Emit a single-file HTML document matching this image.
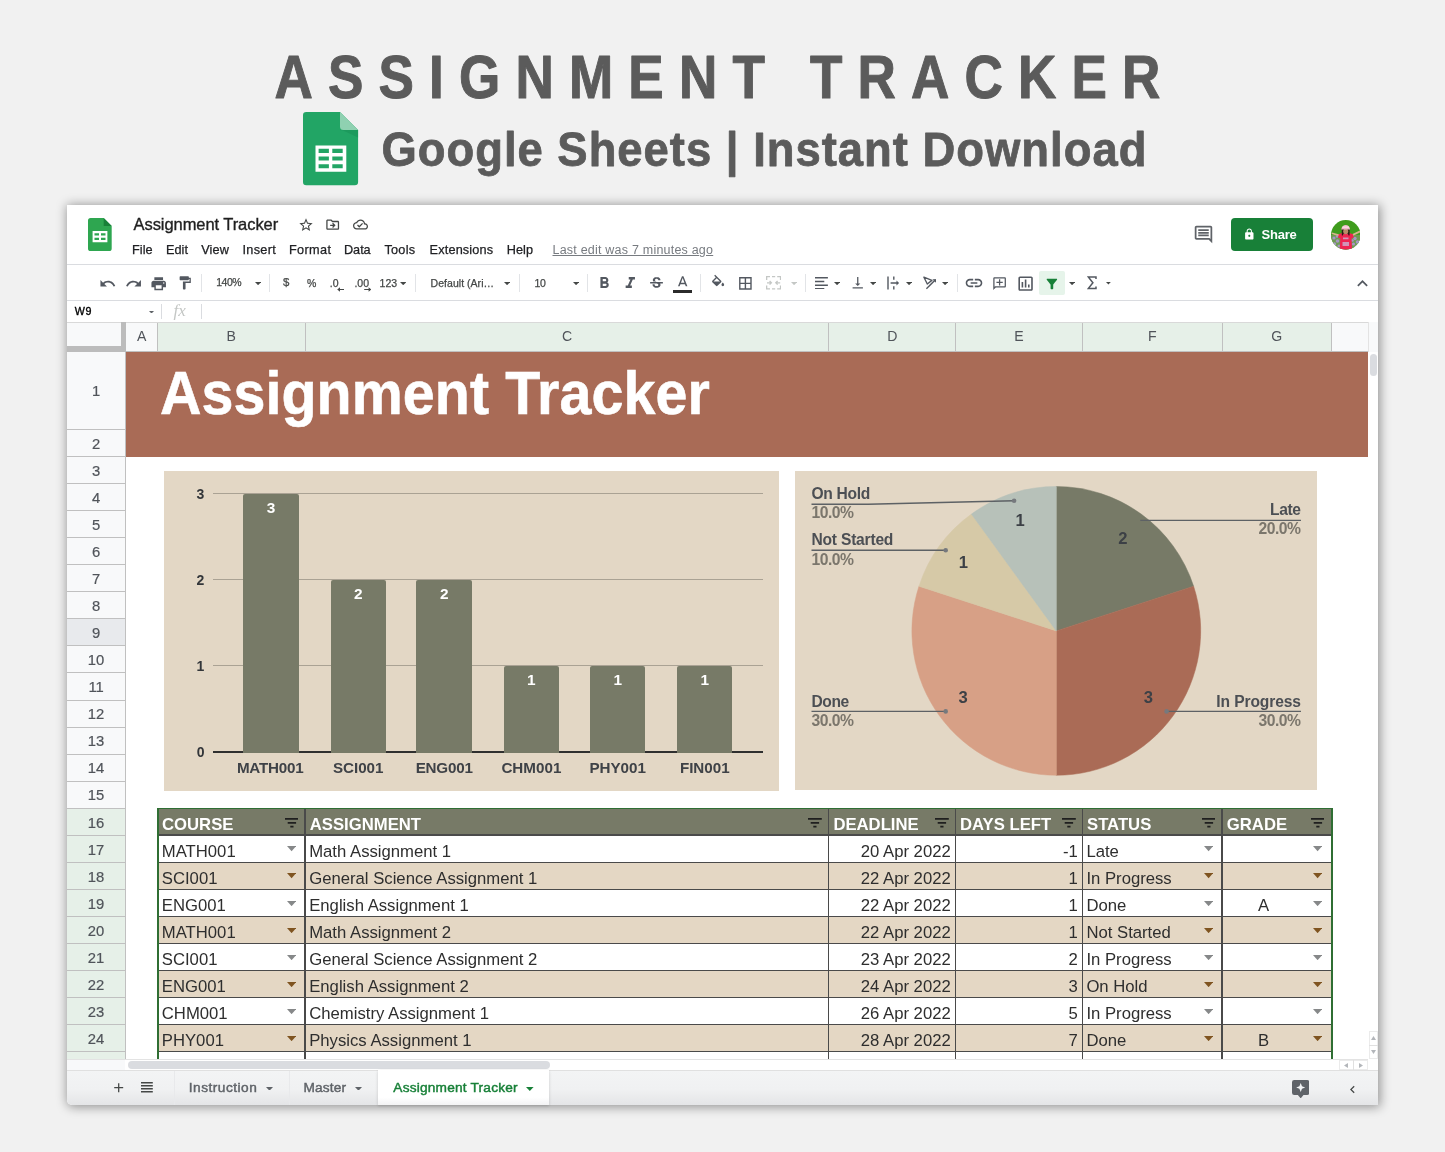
<!DOCTYPE html>
<html><head><meta charset="utf-8"><title>Assignment Tracker</title>
<style>
html,body{margin:0;padding:0}
body{width:1445px;height:1152px;background:#f1f1f1;position:relative;overflow:hidden;font-family:"Liberation Sans",sans-serif}
.t{position:absolute;line-height:1;white-space:nowrap}
.r{position:absolute;display:block}
#win{position:absolute;left:67px;top:205px;width:1311.4px;height:899.7px;background:#fff;border-radius:0 0 0 5px;box-shadow:1px 1px 11px 1px rgba(0,0,0,.4)}
</style></head><body><div id="all" style="position:absolute;left:0;top:0;width:1445px;height:1152px;will-change:transform">

<svg class="r" style="left:253.60px;top:36.90px" width="927.0" height="85.4"><text transform="scale(0.87,1)" x="23.56" y="61.00" font-family="Liberation Sans, sans-serif" font-weight="700" font-size="61.0" letter-spacing="17.444" fill="#5b5b5b" stroke="#5b5b5b" stroke-width="1.0" stroke-linejoin="round">ASSIGNMENT TRACKER</text></svg>
<svg class="r" style="left:361.20px;top:117.70px" width="806.0" height="66.9"><text transform="scale(0.95,1)" x="21.47" y="47.80" font-family="Liberation Sans, sans-serif" font-weight="700" font-size="47.8" letter-spacing="1.050" fill="#5b5b5b" stroke="#5b5b5b" stroke-width="0.8" stroke-linejoin="round">Google Sheets | Instant Download</text></svg>
<svg class="r" style="left:302.1px;top:110.6px" width="57.1" height="75.3" viewBox="-1 -1 57.1 75.3">
<path d="M3.300 0H37L55.100 18.100V70a3.300 3.300 0 0 1-3.300 3.300H3.300a3.300 3.300 0 0 1-3.300-3.300V3.300a3.300 3.300 0 0 1 3.300-3.300z" fill="#22a565"/>
<path d="M37 18.100H55.100V25.500L40 18.600z" fill="#178a52" opacity=".4"/>
<path d="M37 0L55.100 18.100H40.500a3.500 3.500 0 0 1-3.500-3.500z" fill="#8fd1b1"/>
<path d="M12.500 33.400h30.800v26.400H12.500zM15.600 36.800v4.300h10.300v-4.300zM29.300 36.800v4.300h10.400v-4.300zM15.600 44.600v3.900h10.300v-3.900zM29.300 44.600v3.900h10.400v-3.900zM15.600 52.300v3.900h10.300v-3.900zM29.300 52.300v3.900h10.400v-3.900z" fill="#fff" fill-rule="evenodd"/>
</svg>
<div id="win"></div>
<svg class="r" style="left:88.3px;top:218px" width="23.7" height="33" viewBox="0 0 23.7 33">
<path d="M2.6 0H15.700L23.700 8V30.400a2.600 2.600 0 0 1-2.600 2.600H2.600A2.600 2.600 0 0 1 0 30.400V2.600A2.600 2.600 0 0 1 2.600 0z" fill="#2ea650"/>
<path d="M15.700 0L23.700 8H15.700z" fill="#188038"/>
<path d="M4.600 13.100h14.800v11.100H4.600zM6.500 15.300v2.300h4.500v-2.300zM13 15.300v2.300h4.500v-2.300zM6.500 19.700v2.300h4.500v-2.300zM13 19.700v2.300h4.500v-2.300z" fill="#fff" fill-rule="evenodd"/>
</svg>
<span class="t" style="left:133.50px;top:216.03px;font-size:16.5px;color:#1f1f1f;letter-spacing:-0.065px;-webkit-text-stroke:.35px currentColor;">Assignment Tracker</span>
<svg class="r" style="left:297.50px;top:216.70px;" width="16" height="16" viewBox="0 0 24 24" fill="#444746"><path d="M22 9.240l-7.190-.62L12 2 9.190 8.630 2 9.240l5.460 4.730L5.820 21 12 17.270 18.180 21l-1.630-7.030L22 9.240zM12 15.400l-3.760 2.270 1-4.280-3.320-2.880 4.380-.38L12 6.100l1.710 4.040 4.380.38-3.320 2.880 1 4.280L12 15.400z"/></svg>
<svg class="r" style="left:324.60px;top:216.70px;" width="15.4" height="15.4" viewBox="0 0 24 24" fill="#444746"><path d="M20 6h-8l-2-2H4c-1.100 0-2 .9-2 2v12c0 1.100.9 2 2 2h16c1.100 0 2-.9 2-2V8c0-1.100-.9-2-2-2zm0 12H4V6h5.170l2 2H20v10zm-7.500-1l4-4-4-4-1.410 1.410L12.670 12H8v2h4.670l-1.580 1.590z"/></svg>
<svg class="r" style="left:352.70px;top:217.30px;" width="15" height="15" viewBox="0 0 24 24" fill="#444746"><path d="M19.350 10.040C18.670 6.590 15.640 4 12 4 9.110 4 6.600 5.640 5.350 8.040 2.340 8.360 0 10.910 0 14c0 3.310 2.690 6 6 6h13c2.760 0 5-2.240 5-5 0-2.640-2.050-4.780-4.650-4.960zM19 18H6c-2.210 0-4-1.790-4-4s1.790-4 4-4h.71C7.370 7.690 9.480 6 12 6c3.040 0 5.500 2.460 5.500 5.500v.5H19c1.660 0 3 1.340 3 3s-1.340 3-3 3zm-9-3.820l-2.090-2.090L6.500 13.500 10 17l6.010-6.010-1.410-1.410z"/></svg>
<span class="t" style="left:132.00px;top:243.95px;font-size:12.7px;color:#202124;letter-spacing:0.079px;-webkit-text-stroke:.25px currentColor;">File</span>
<span class="t" style="left:165.90px;top:243.95px;font-size:12.7px;color:#202124;letter-spacing:0.072px;-webkit-text-stroke:.25px currentColor;">Edit</span>
<span class="t" style="left:201.20px;top:243.95px;font-size:12.7px;color:#202124;letter-spacing:0.158px;-webkit-text-stroke:.25px currentColor;">View</span>
<span class="t" style="left:242.40px;top:243.95px;font-size:12.7px;color:#202124;letter-spacing:0.347px;-webkit-text-stroke:.25px currentColor;">Insert</span>
<span class="t" style="left:289.00px;top:243.95px;font-size:12.7px;color:#202124;letter-spacing:0.356px;-webkit-text-stroke:.25px currentColor;">Format</span>
<span class="t" style="left:344.00px;top:243.95px;font-size:12.7px;color:#202124;letter-spacing:-0.042px;-webkit-text-stroke:.25px currentColor;">Data</span>
<span class="t" style="left:384.40px;top:243.95px;font-size:12.7px;color:#202124;letter-spacing:0.286px;-webkit-text-stroke:.25px currentColor;">Tools</span>
<span class="t" style="left:429.60px;top:243.95px;font-size:12.7px;color:#202124;letter-spacing:0.164px;-webkit-text-stroke:.25px currentColor;">Extensions</span>
<span class="t" style="left:506.70px;top:243.95px;font-size:12.7px;color:#202124;letter-spacing:0.060px;-webkit-text-stroke:.25px currentColor;">Help</span>
<span class="t" style="left:552.50px;top:244.12px;font-size:12.5px;color:#777b80;letter-spacing:0.213px;text-decoration:underline;text-underline-offset:.6px;text-decoration-thickness:1px;">Last edit was 7 minutes ago</span>
<svg class="r" style="left:1193.30px;top:223.50px;" width="21" height="21" viewBox="0 0 24 24" fill="#5f6368"><path d="M21.990 4c0-1.100-.89-2-1.990-2H4c-1.100 0-2 .9-2 2v12c0 1.100.9 2 2 2h14l4 4-.010-18zM20 4v13.170L18.830 16H4V4h16zM6 12h12v2H6zm0-3h12v2H6zm0-3h12v2H6z"/></svg>
<div class="r" style="left:1231.40px;top:218.00px;width:81.40px;height:33.20px;background:#188038;border-radius:4px;"></div>
<svg class="r" style="left:1243.20px;top:227.90px;" width="12.6" height="12.6" viewBox="0 0 24 24" fill="#fff"><path d="M18 8h-1V6c0-2.760-2.240-5-5-5S7 3.240 7 6v2H6c-1.100 0-2 .9-2 2v10c0 1.100.9 2 2 2h12c1.100 0 2-.9 2-2V10c0-1.100-.9-2-2-2zm-6 9c-1.100 0-2-.9-2-2s.9-2 2-2 2 .9 2 2-.9 2-2 2zm3.100-9H8.900V6c0-1.710 1.390-3.100 3.100-3.100 1.710 0 3.100 1.390 3.100 3.100v2z"/></svg>
<span class="t" style="left:1261.60px;top:227.80px;font-size:13px;color:#fff;font-weight:700;letter-spacing:-0.233px;">Share</span>
<svg class="r" style="left:1330.900px;top:219.800px" width="29.600" height="29.800" viewBox="0 0 29.6 29.8">
<defs><clipPath id="avc"><circle cx="14.800" cy="14.900" r="14.800"/></clipPath></defs>
<g clip-path="url(#avc)">
<rect width="29.600" height="29.800" fill="#3f9c1d"/>
<rect y="15" width="29.600" height="15" fill="#6f9a52"/>
<g fill="#a596c4"><circle cx="3" cy="18" r="1.600"/><circle cx="6.500" cy="21" r="1.800"/><circle cx="3.500" cy="24" r="1.700"/><circle cx="8" cy="26" r="1.600"/><circle cx="24" cy="18.500" r="1.700"/><circle cx="26.500" cy="22" r="1.800"/><circle cx="22.500" cy="24" r="1.600"/><circle cx="25" cy="27" r="1.600"/><circle cx="6" cy="16.500" r="1.200"/><circle cx="21.500" cy="20.500" r="1.300"/></g>
<path d="M1 12.500L8.500 14.500 8 16.300 .6 14z" fill="#d8b48e"/>
<path d="M28.800 10.500L21 14.300 21.700 16 29.300 12.300z" fill="#d8b48e"/>
<path d="M7.800 14.200L11 13h7.500l3.400 1.200.8 3.300-2.200.9.600 11.400H8.700l.6-11.400-2.300-.9z" fill="#ee2450"/>
<path d="M12 17.500h5.500v1.800H12zM11.500 22h6.500v4h-6.500z" fill="#c8b8d8" opacity=".75"/>
<path d="M10.800 8.500h7.800v6.800c-.9.700-1.500-.6-1.500-1.600h-4.800c0 1-.6 2.300-1.500 1.600z" fill="#2a1c16"/>
<ellipse cx="14.700" cy="11.300" rx="2.500" ry="2.900" fill="#b98a68"/>
<path d="M10.300 9.600c0-6.300 8.800-6.300 8.800 0z" fill="#f0b8c8"/>
<path d="M11.300 6.500h6.800v1.200h-6.800z" fill="#fff" opacity=".6"/>
</g></svg>
<div class="r" style="left:67.00px;top:264.00px;width:1311.40px;height:1.00px;background:#dadce0;"></div>
<div class="r" style="left:67.00px;top:300.00px;width:1311.40px;height:1.00px;background:#dadce0;"></div>
<svg class="r" style="left:98.60px;top:274.50px;" width="17.4" height="17.4" viewBox="0 0 24 24" fill="#535860"><path d="M12.5 8c-2.65 0-5.05.99-6.9 2.6L2 7v9h9l-3.62-3.62c1.39-1.16 3.16-1.88 5.12-1.88 3.54 0 6.55 2.31 7.6 5.5l2.37-.78C21.08 11.03 17.15 8 12.5 8z"/></svg>
<svg class="r" style="left:124.70px;top:274.50px;" width="17.4" height="17.4" viewBox="0 0 24 24" fill="#535860"><path d="M18.4 10.6C16.55 8.99 14.15 8 11.5 8c-4.65 0-8.58 3.03-9.96 7.22L3.9 16c1.05-3.19 4.05-5.5 7.6-5.5 1.95 0 3.73.72 5.12 1.88L13 16h9V7l-3.6 3.6z"/></svg>
<svg class="r" style="left:150.30px;top:274.50px;" width="17.4" height="17.4" viewBox="0 0 24 24" fill="#535860"><path d="M19 8H5c-1.66 0-3 1.34-3 3v6h4v4h12v-4h4v-6c0-1.66-1.34-3-3-3zm-3 11H8v-5h8v5zm3-7c-.55 0-1-.45-1-1s.45-1 1-1 1 .45 1 1-.45 1-1 1zm-1-9H6v4h12V3z"/></svg>
<svg class="r" style="left:177.00px;top:275.30px;" width="15.8" height="15.8" viewBox="0 0 24 24" fill="#535860"><path d="M18 4V3c0-.55-.45-1-1-1H5c-.55 0-1 .45-1 1v4c0 .55.45 1 1 1h12c.55 0 1-.45 1-1V6h1v4H9v11c0 .55.45 1 1 1h2c.55 0 1-.45 1-1v-9h8V4h-3z"/></svg>
<div class="r" style="left:201.20px;top:273.50px;width:1.00px;height:18.50px;background:#e2e4e7;"></div>
<span class="t" style="left:216.30px;top:277.41px;font-size:10.5px;color:#444746;letter-spacing:-0.518px;-webkit-text-stroke:.25px currentColor;">140%</span>
<svg class="r" style="left:254.70px;top:281.60px" width="6.2" height="3.2" viewBox="0 0 10 5" preserveAspectRatio="none" fill="#444746"><path d="M0 0h10L5 5z"/></svg>
<div class="r" style="left:268.80px;top:273.50px;width:1.00px;height:18.50px;background:#e2e4e7;"></div>
<span class="t" style="left:283.00px;top:276.95px;font-size:11.4px;color:#444746;-webkit-text-stroke:.25px currentColor;">$</span>
<span class="t" style="left:307.00px;top:277.81px;font-size:10.5px;color:#444746;-webkit-text-stroke:.25px currentColor;">%</span>
<span class="t" style="left:329.80px;top:277.81px;font-size:10.5px;color:#444746;-webkit-text-stroke:.25px currentColor;">.0</span>
<span class="t" style="left:354.40px;top:277.81px;font-size:10.5px;color:#444746;-webkit-text-stroke:.25px currentColor;">.00</span>
<svg class="r" style="left:336.600px;top:287.200px" width="7.600" height="5" viewBox="0 0 7.6 5" fill="#444746"><path d="M7.400 1.900H3V.3L.2 2.500 3 4.700V3.100h4.400z"/></svg>
<svg class="r" style="left:363.800px;top:287.200px" width="7.600" height="5" viewBox="0 0 7.6 5" fill="#444746"><path d="M.2 1.900H4.600V.3L7.400 2.500 4.600 4.700V3.100H.2z"/></svg>
<span class="t" style="left:379.60px;top:277.81px;font-size:10.5px;color:#444746;letter-spacing:-0.009px;-webkit-text-stroke:.25px currentColor;">123</span>
<svg class="r" style="left:399.50px;top:282.00px" width="6.4" height="3.2" viewBox="0 0 10 5" preserveAspectRatio="none" fill="#444746"><path d="M0 0h10L5 5z"/></svg>
<div class="r" style="left:414.70px;top:273.50px;width:1.00px;height:18.50px;background:#e2e4e7;"></div>
<span class="t" style="left:430.60px;top:277.81px;font-size:10.5px;color:#444746;letter-spacing:0.032px;-webkit-text-stroke:.25px currentColor;">Default (Ari&hellip;</span>
<svg class="r" style="left:504.30px;top:281.80px" width="6.2" height="3.2" viewBox="0 0 10 5" preserveAspectRatio="none" fill="#444746"><path d="M0 0h10L5 5z"/></svg>
<div class="r" style="left:519.10px;top:273.50px;width:1.00px;height:18.50px;background:#e2e4e7;"></div>
<span class="t" style="left:534.50px;top:277.51px;font-size:10.5px;color:#444746;letter-spacing:-0.279px;-webkit-text-stroke:.25px currentColor;">10</span>
<svg class="r" style="left:573.00px;top:281.80px" width="6.2" height="3.2" viewBox="0 0 10 5" preserveAspectRatio="none" fill="#444746"><path d="M0 0h10L5 5z"/></svg>
<div class="r" style="left:587.20px;top:273.50px;width:1.00px;height:18.50px;background:#e2e4e7;"></div>
<svg class="r" style="left:595.10px;top:274.10px;" width="18.6" height="18.6" viewBox="0 0 24 24" fill="#535860"><path d="M15.6 10.79c.97-.67 1.65-1.77 1.65-2.79 0-2.26-1.75-4-4-4H7v14h7.04c2.09 0 3.71-1.7 3.71-3.79 0-1.52-.86-2.82-2.15-3.42zM10 6.5h3c.83 0 1.5.67 1.5 1.5s-.67 1.5-1.5 1.5h-3v-3zm3.5 9H10v-3h3.5c.83 0 1.5.67 1.5 1.5s-.67 1.5-1.5 1.5z"/></svg>
<svg class="r" style="left:621.00px;top:274.10px;" width="18.6" height="18.6" viewBox="0 0 24 24" fill="#535860"><path d="M10 4v3h2.21l-3.42 8H6v3h8v-3h-2.21l3.42-8H18V4z"/></svg>
<svg class="r" style="left:647.50px;top:275.10px;" width="17" height="17" viewBox="0 0 24 24" fill="#535860"><path d="M7.24 8.75c-.26-.48-.39-1.03-.39-1.67 0-.61.13-1.16.4-1.67.26-.5.63-.93 1.11-1.29.48-.35 1.05-.63 1.7-.83.66-.19 1.39-.29 2.18-.29.81 0 1.54.11 2.21.34.66.22 1.23.54 1.69.94.47.4.83.88 1.08 1.43.25.55.38 1.15.38 1.81h-3.01c0-.31-.05-.59-.15-.85-.09-.27-.24-.49-.44-.68-.2-.19-.45-.33-.75-.44-.3-.1-.66-.16-1.06-.16-.39 0-.74.04-1.03.13-.29.09-.53.21-.72.36-.19.16-.34.34-.44.55-.1.21-.15.43-.15.66 0 .48.25.88.74 1.21.38.25.77.48 1.41.7H7.39c-.05-.08-.11-.17-.15-.25zM21 12v-2H3v2h9.620c.18.07.4.14.55.2.37.17.66.34.87.51.21.17.35.36.43.57.07.2.11.43.11.69 0 .23-.05.45-.14.66-.09.2-.23.38-.42.53-.19.15-.42.26-.71.35-.29.08-.63.13-1.01.13-.43 0-.83-.04-1.18-.13s-.66-.23-.91-.42c-.25-.19-.45-.44-.59-.75-.14-.31-.25-.76-.25-1.21H6.400c0 .55.08 1.13.24 1.58.16.45.37.85.65 1.21.28.35.6.66.98.92.37.26.78.48 1.22.65.44.17.9.3 1.38.39.48.08.96.13 1.44.13.8 0 1.53-.09 2.18-.28s1.21-.45 1.67-.79c.46-.34.82-.77 1.07-1.27s.38-1.07.38-1.71c0-.6-.1-1.14-.31-1.61-.05-.11-.11-.23-.17-.33H21z"/></svg>
<svg class="r" style="left:673.60px;top:273.50px;" width="17.4" height="17.4" viewBox="0 0 24 24" fill="#535860"><path d="M11 3L5.5 17h2.25l1.12-3h6.25l1.12 3h2.250L13 3h-2zm-1.38 9L12 5.670 14.380 12H9.620z"/></svg>
<div class="r" style="left:673.20px;top:290.30px;width:19.00px;height:3.20px;background:#2b2b2b;"></div>
<div class="r" style="left:700.00px;top:273.50px;width:1.00px;height:18.50px;background:#e2e4e7;"></div>
<svg class="r" style="left:710.30px;top:274.30px;" width="16.2" height="16.2" viewBox="0 -1 24 24" fill="#535860"><path d="M16.56 8.94L7.62 0 6.21 1.41l2.38 2.38-5.15 5.15c-.59.59-.59 1.54 0 2.12l5.500 5.500c.29.29.68.44 1.06.44s.77-.15 1.06-.44l5.500-5.500c.59-.58.59-1.53 0-2.120zM5.21 10L10 5.21 14.79 10H5.210zM19 11.500s-2 2.170-2 3.500c0 1.100.9 2 2 2s2-.9 2-2c0-1.330-2-3.500-2-3.500z"/></svg>
<svg class="r" style="left:737.00px;top:274.70px;" width="16.8" height="16.8" viewBox="0 0 24 24" fill="#535860"><path d="M3 3v18h18V3H3zm8 16H5v-6h6v6zm0-8H5V5h6v6zm8 8h-6v-6h6v6zm0-8h-6V5h6v6z"/></svg>
<svg class="r" style="left:765.800px;top:276.300px" width="15.200" height="13.600" viewBox="0 0 15.2 13.6" fill="none" stroke="#c4c7c5" stroke-width="1.300"><path d="M.65 4V.65H4M6 .65h3.200M11.200 .65h3.350V4M.65 9.600v3.350H4M6 12.950h3.200M11.200 12.950h3.350V9.600M1 6.800h4M3.600 5l1.800 1.800-1.800 1.800M14.200 6.800h-4M11.600 5L9.800 6.800l1.800 1.800"/></svg>
<svg class="r" style="left:790.50px;top:281.80px" width="6.2" height="3.2" viewBox="0 0 10 5" preserveAspectRatio="none" fill="#c4c7c5"><path d="M0 0h10L5 5z"/></svg>
<div class="r" style="left:805.20px;top:273.50px;width:1.00px;height:18.50px;background:#e2e4e7;"></div>
<svg class="r" style="left:815px;top:276.700px" width="12.900" height="12.700" viewBox="0 0 12.9 12.7" fill="#535860"><path d="M0 0h12.900v1.600H0zM0 3.700h9.300v1.600H0zM0 7.400h12.900v1.600H0zM0 11.100h9.300v1.600H0z"/></svg>
<svg class="r" style="left:834.30px;top:281.80px" width="6.2" height="3.2" viewBox="0 0 10 5" preserveAspectRatio="none" fill="#444746"><path d="M0 0h10L5 5z"/></svg>
<svg class="r" style="left:849.85px;top:275.35px;" width="15.5" height="15.5" viewBox="0 0 24 24" fill="#535860"><path d="M16 13h-3V3h-2v10H8l4 4 4-4zM4 19v2h16v-2H4z"/></svg>
<svg class="r" style="left:870.10px;top:281.80px" width="6.2" height="3.2" viewBox="0 0 10 5" preserveAspectRatio="none" fill="#444746"><path d="M0 0h10L5 5z"/></svg>
<svg class="r" style="left:886.500px;top:276.200px" width="13" height="14" viewBox="0 0 13 14" fill="none" stroke="#535860" stroke-width="1.400"><path d="M1 .5v13M6.800 .5v3.200M6.800 10.300v3.200M3.600 7h7.600"/><path d="M9.500 4.600L12 7 9.500 9.400z" fill="#535860" stroke="none"/></svg>
<svg class="r" style="left:905.90px;top:281.80px" width="6.2" height="3.2" viewBox="0 0 10 5" preserveAspectRatio="none" fill="#444746"><path d="M0 0h10L5 5z"/></svg>
<svg class="r" style="left:922.500px;top:276.200px" width="13.500" height="14" viewBox="0 0 13.5 14" fill="none" stroke="#535860" stroke-width="1.350" stroke-linejoin="round"><path d="M.9 1.200l8 3.200-4.600 3.600z"/><path d="M3.400 12.800L12.600 3.600"/><path d="M9.400 3.200h3.600v3.600z" fill="#535860" stroke="none"/></svg>
<svg class="r" style="left:941.60px;top:281.80px" width="6.2" height="3.2" viewBox="0 0 10 5" preserveAspectRatio="none" fill="#444746"><path d="M0 0h10L5 5z"/></svg>
<div class="r" style="left:957.10px;top:273.50px;width:1.00px;height:18.50px;background:#e2e4e7;"></div>
<svg class="r" style="left:963.90px;top:273.30px;" width="20" height="20" viewBox="0 0 24 24" fill="#535860"><path d="M3.9 12c0-1.710 1.390-3.100 3.100-3.100h4V7H7c-2.760 0-5 2.240-5 5s2.240 5 5 5h4v-1.900H7c-1.710 0-3.100-1.390-3.100-3.100zM8 13h8v-2H8v2zm9-6h-4v1.900h4c1.710 0 3.100 1.390 3.100 3.100s-1.390 3.100-3.100 3.100h-4V17h4c2.760 0 5-2.240 5-5s-2.240-5-5-5z"/></svg>
<svg class="r" style="left:992.10px;top:276.00px;transform:scaleX(-1);" width="15.2" height="15.2" viewBox="0 0 24 24" fill="#535860"><path d="M22 4c0-1.100-.9-2-2-2H4c-1.100 0-2 .9-2 2v12c0 1.100.9 2 2 2h14l4 4V4zm-2 13.170L18.830 16H4V4h16v13.170zM13 5h-2v4H7v2h4v4h2v-4h4V9h-4z"/></svg>
<svg class="r" style="left:1016.00px;top:273.50px;" width="19.2" height="19.2" viewBox="0 0 24 24" fill="#535860"><path d="M9 17H7v-7h2v7zm4 0h-2V7h2v10zm4 0h-2v-4h2v4zm2 2H5V5h14v14zm0-16H5c-1.100 0-2 .9-2 2v14c0 1.100.9 2 2 2h14c1.100 0 2-.9 2-2V5c0-1.100-.9-2-2-2z"/></svg>
<div class="r" style="left:1039.20px;top:270.90px;width:26.00px;height:23.80px;background:#e6f4ea;border-radius:2px;"></div>
<svg class="r" style="left:1044.30px;top:275.70px;" width="15.8" height="15.8" viewBox="0 0 24 24" fill="#188038"><path d="M4.25 5.61C6.27 8.2 10 13 10 13v6c0 .55.45 1 1 1h2c.55 0 1-.45 1-1v-6s3.72-4.8 5.74-7.39c.51-.66.04-1.61-.79-1.61H5.04c-.83 0-1.3.95-.79 1.61z"/></svg>
<svg class="r" style="left:1069.10px;top:281.80px" width="6.2" height="3.2" viewBox="0 0 10 5" preserveAspectRatio="none" fill="#444746"><path d="M0 0h10L5 5z"/></svg>
<svg class="r" style="left:1087.400px;top:276.300px" width="10" height="13.400" viewBox="0 0 10 13.4" fill="none" stroke="#535860" stroke-width="1.500" stroke-linejoin="miter"><path d="M9 2.900V.9H1.300L5.900 6.700 1.300 12.500H9v-2"/></svg>
<svg class="r" style="left:1106.30px;top:282.30px" width="4.8" height="2.6" viewBox="0 0 10 5" preserveAspectRatio="none" fill="#444746"><path d="M0 0h10L5 5z"/></svg>
<svg class="r" style="left:1351.80px;top:273.00px;" width="21" height="21" viewBox="0 0 24 24" fill="#535860"><path d="M12 8l-6 6 1.410 1.410L12 10.830l4.590 4.580L18 14z"/></svg>
<span class="t" style="left:74.70px;top:305.84px;font-size:10.7px;color:#000;letter-spacing:0.650px;-webkit-text-stroke:.35px #000;">W9</span>
<svg class="r" style="left:149.30px;top:310.60px" width="5" height="2.6" viewBox="0 0 10 5" preserveAspectRatio="none" fill="#5f6368"><path d="M0 0h10L5 5z"/></svg>
<div class="r" style="left:160.80px;top:304.00px;width:1.00px;height:15.00px;background:#dadce0;"></div>
<span class="t" style="left:173.60px;top:302.21px;font-size:17px;color:#c4c7c5;font-style:italic;font-family:'Liberation Serif',serif;">fx</span>
<div class="r" style="left:201.10px;top:304.00px;width:1.00px;height:15.00px;background:#dadce0;"></div>
<div class="r" style="left:67.00px;top:322.00px;width:1301.00px;height:29.60px;background:#f8f9fa;"></div>
<div class="r" style="left:157.30px;top:322.00px;width:147.70px;height:29.60px;background:#e6f0e8;"></div>
<div class="r" style="left:305.00px;top:322.00px;width:523.80px;height:29.60px;background:#e6f0e8;"></div>
<div class="r" style="left:828.80px;top:322.00px;width:126.70px;height:29.60px;background:#e6f0e8;"></div>
<div class="r" style="left:955.50px;top:322.00px;width:126.90px;height:29.60px;background:#e6f0e8;"></div>
<div class="r" style="left:1082.40px;top:322.00px;width:139.80px;height:29.60px;background:#e6f0e8;"></div>
<div class="r" style="left:1222.20px;top:322.00px;width:109.10px;height:29.60px;background:#e6f0e8;"></div>
<div class="r" style="left:156.80px;top:322.00px;width:1.00px;height:29.60px;background:#c0c0c0;"></div>
<span class="t" style="left:137.05px;top:328.96px;font-size:14.1px;color:#50545a;">A</span>
<div class="r" style="left:304.50px;top:322.00px;width:1.00px;height:29.60px;background:#c0c0c0;"></div>
<span class="t" style="left:226.55px;top:328.96px;font-size:14.1px;color:#50545a;">B</span>
<div class="r" style="left:828.30px;top:322.00px;width:1.00px;height:29.60px;background:#c0c0c0;"></div>
<span class="t" style="left:561.91px;top:328.96px;font-size:14.1px;color:#50545a;">C</span>
<div class="r" style="left:955.00px;top:322.00px;width:1.00px;height:29.60px;background:#c0c0c0;"></div>
<span class="t" style="left:887.16px;top:328.96px;font-size:14.1px;color:#50545a;">D</span>
<div class="r" style="left:1081.90px;top:322.00px;width:1.00px;height:29.60px;background:#c0c0c0;"></div>
<span class="t" style="left:1014.35px;top:328.96px;font-size:14.1px;color:#50545a;">E</span>
<div class="r" style="left:1221.70px;top:322.00px;width:1.00px;height:29.60px;background:#c0c0c0;"></div>
<span class="t" style="left:1148.09px;top:328.96px;font-size:14.1px;color:#50545a;">F</span>
<div class="r" style="left:1330.80px;top:322.00px;width:1.00px;height:29.60px;background:#c0c0c0;"></div>
<span class="t" style="left:1271.37px;top:328.96px;font-size:14.1px;color:#50545a;">G</span>
<div class="r" style="left:67.00px;top:321.70px;width:1301.00px;height:1.00px;background:#d9d9d9;"></div>
<div class="r" style="left:126.00px;top:350.80px;width:1242.00px;height:1.10px;background:#c0c0c0;"></div>
<div class="r" style="left:120.60px;top:322.00px;width:5.40px;height:29.60px;background:#bcbcbc;"></div>
<div class="r" style="left:67.00px;top:346.40px;width:59.00px;height:5.20px;background:#bcbcbc;"></div>
<div class="r" style="left:1368.00px;top:322.00px;width:10.40px;height:737.40px;background:#fff;"></div>
<div class="r" style="left:1368.00px;top:322.00px;width:10.40px;height:29.60px;background:#f8f9fa;"></div>
<div class="r" style="left:1367.50px;top:322.00px;width:1.00px;height:29.60px;background:#e3e3e3;"></div>
<div class="r" style="left:1369.80px;top:353.50px;width:7.60px;height:22.80px;background:#dadce0;border-radius:4px;"></div>
<div class="r" style="left:67.00px;top:351.60px;width:58.20px;height:707.80px;background:#f8f9fa;"></div>
<div class="r" style="left:67.00px;top:618.82px;width:58.20px;height:27.06px;background:#e8eaed;"></div>
<div class="r" style="left:67.00px;top:808.24px;width:58.20px;height:27.06px;background:#e6f0e8;"></div>
<div class="r" style="left:67.00px;top:835.30px;width:58.20px;height:27.06px;background:#e6f0e8;"></div>
<div class="r" style="left:67.00px;top:862.36px;width:58.20px;height:27.06px;background:#e6f0e8;"></div>
<div class="r" style="left:67.00px;top:889.42px;width:58.20px;height:27.06px;background:#e6f0e8;"></div>
<div class="r" style="left:67.00px;top:916.48px;width:58.20px;height:27.06px;background:#e6f0e8;"></div>
<div class="r" style="left:67.00px;top:943.54px;width:58.20px;height:27.06px;background:#e6f0e8;"></div>
<div class="r" style="left:67.00px;top:970.60px;width:58.20px;height:27.06px;background:#e6f0e8;"></div>
<div class="r" style="left:67.00px;top:997.66px;width:58.20px;height:27.06px;background:#e6f0e8;"></div>
<div class="r" style="left:67.00px;top:1024.72px;width:58.20px;height:27.06px;background:#e6f0e8;"></div>
<div class="r" style="left:67.00px;top:1051.78px;width:58.20px;height:7.62px;background:#e6f0e8;"></div>
<div class="r" style="left:67.00px;top:428.90px;width:58.20px;height:1.00px;background:#c0c0c0;"></div>
<span class="t" style="left:91.98px;top:384.27px;font-size:14.8px;color:#50545a;-webkit-text-stroke:.2px currentColor;">1</span>
<div class="r" style="left:67.00px;top:455.96px;width:58.20px;height:1.00px;background:#c0c0c0;"></div>
<span class="t" style="left:91.98px;top:436.70px;font-size:14.8px;color:#50545a;-webkit-text-stroke:.2px currentColor;">2</span>
<div class="r" style="left:67.00px;top:483.02px;width:58.20px;height:1.00px;background:#c0c0c0;"></div>
<span class="t" style="left:91.98px;top:463.76px;font-size:14.8px;color:#50545a;-webkit-text-stroke:.2px currentColor;">3</span>
<div class="r" style="left:67.00px;top:510.08px;width:58.20px;height:1.00px;background:#c0c0c0;"></div>
<span class="t" style="left:91.98px;top:490.82px;font-size:14.8px;color:#50545a;-webkit-text-stroke:.2px currentColor;">4</span>
<div class="r" style="left:67.00px;top:537.14px;width:58.20px;height:1.00px;background:#c0c0c0;"></div>
<span class="t" style="left:91.98px;top:517.88px;font-size:14.8px;color:#50545a;-webkit-text-stroke:.2px currentColor;">5</span>
<div class="r" style="left:67.00px;top:564.20px;width:58.20px;height:1.00px;background:#c0c0c0;"></div>
<span class="t" style="left:91.98px;top:544.94px;font-size:14.8px;color:#50545a;-webkit-text-stroke:.2px currentColor;">6</span>
<div class="r" style="left:67.00px;top:591.26px;width:58.20px;height:1.00px;background:#c0c0c0;"></div>
<span class="t" style="left:91.98px;top:572.00px;font-size:14.8px;color:#50545a;-webkit-text-stroke:.2px currentColor;">7</span>
<div class="r" style="left:67.00px;top:618.32px;width:58.20px;height:1.00px;background:#c0c0c0;"></div>
<span class="t" style="left:91.98px;top:599.06px;font-size:14.8px;color:#50545a;-webkit-text-stroke:.2px currentColor;">8</span>
<div class="r" style="left:67.00px;top:645.38px;width:58.20px;height:1.00px;background:#c0c0c0;"></div>
<span class="t" style="left:91.98px;top:626.12px;font-size:14.8px;color:#50545a;-webkit-text-stroke:.2px currentColor;">9</span>
<div class="r" style="left:67.00px;top:672.44px;width:58.20px;height:1.00px;background:#c0c0c0;"></div>
<span class="t" style="left:87.87px;top:653.18px;font-size:14.8px;color:#50545a;-webkit-text-stroke:.2px currentColor;">10</span>
<div class="r" style="left:67.00px;top:699.50px;width:58.20px;height:1.00px;background:#c0c0c0;"></div>
<span class="t" style="left:88.42px;top:680.24px;font-size:14.8px;color:#50545a;-webkit-text-stroke:.2px currentColor;">11</span>
<div class="r" style="left:67.00px;top:726.56px;width:58.20px;height:1.00px;background:#c0c0c0;"></div>
<span class="t" style="left:87.87px;top:707.30px;font-size:14.8px;color:#50545a;-webkit-text-stroke:.2px currentColor;">12</span>
<div class="r" style="left:67.00px;top:753.62px;width:58.20px;height:1.00px;background:#c0c0c0;"></div>
<span class="t" style="left:87.87px;top:734.36px;font-size:14.8px;color:#50545a;-webkit-text-stroke:.2px currentColor;">13</span>
<div class="r" style="left:67.00px;top:780.68px;width:58.20px;height:1.00px;background:#c0c0c0;"></div>
<span class="t" style="left:87.87px;top:761.42px;font-size:14.8px;color:#50545a;-webkit-text-stroke:.2px currentColor;">14</span>
<div class="r" style="left:67.00px;top:807.74px;width:58.20px;height:1.00px;background:#c0c0c0;"></div>
<span class="t" style="left:87.87px;top:788.48px;font-size:14.8px;color:#50545a;-webkit-text-stroke:.2px currentColor;">15</span>
<div class="r" style="left:67.00px;top:834.80px;width:58.20px;height:1.00px;background:#c0c0c0;"></div>
<span class="t" style="left:87.87px;top:815.54px;font-size:14.8px;color:#50545a;-webkit-text-stroke:.2px currentColor;">16</span>
<div class="r" style="left:67.00px;top:861.86px;width:58.20px;height:1.00px;background:#c0c0c0;"></div>
<span class="t" style="left:87.87px;top:842.60px;font-size:14.8px;color:#50545a;-webkit-text-stroke:.2px currentColor;">17</span>
<div class="r" style="left:67.00px;top:888.92px;width:58.20px;height:1.00px;background:#c0c0c0;"></div>
<span class="t" style="left:87.87px;top:869.66px;font-size:14.8px;color:#50545a;-webkit-text-stroke:.2px currentColor;">18</span>
<div class="r" style="left:67.00px;top:915.98px;width:58.20px;height:1.00px;background:#c0c0c0;"></div>
<span class="t" style="left:87.87px;top:896.72px;font-size:14.8px;color:#50545a;-webkit-text-stroke:.2px currentColor;">19</span>
<div class="r" style="left:67.00px;top:943.04px;width:58.20px;height:1.00px;background:#c0c0c0;"></div>
<span class="t" style="left:87.87px;top:923.78px;font-size:14.8px;color:#50545a;-webkit-text-stroke:.2px currentColor;">20</span>
<div class="r" style="left:67.00px;top:970.10px;width:58.20px;height:1.00px;background:#c0c0c0;"></div>
<span class="t" style="left:87.87px;top:950.84px;font-size:14.8px;color:#50545a;-webkit-text-stroke:.2px currentColor;">21</span>
<div class="r" style="left:67.00px;top:997.16px;width:58.20px;height:1.00px;background:#c0c0c0;"></div>
<span class="t" style="left:87.87px;top:977.90px;font-size:14.8px;color:#50545a;-webkit-text-stroke:.2px currentColor;">22</span>
<div class="r" style="left:67.00px;top:1024.22px;width:58.20px;height:1.00px;background:#c0c0c0;"></div>
<span class="t" style="left:87.87px;top:1004.96px;font-size:14.8px;color:#50545a;-webkit-text-stroke:.2px currentColor;">23</span>
<div class="r" style="left:67.00px;top:1051.28px;width:58.20px;height:1.00px;background:#c0c0c0;"></div>
<span class="t" style="left:87.87px;top:1032.02px;font-size:14.8px;color:#50545a;-webkit-text-stroke:.2px currentColor;">24</span>
<div class="r" style="left:124.90px;top:351.60px;width:1.00px;height:707.80px;background:#c0c0c0;"></div>
<div class="r" style="left:126.20px;top:351.60px;width:1241.50px;height:105.10px;background:#a96b56;"></div>
<span class="t" style="left:159.80px;top:362.77px;font-size:60.4px;color:#fff;font-weight:700;letter-spacing:0.081px;-webkit-text-stroke:.6px #fff;transform:scaleX(0.95);transform-origin:0 0;">Assignment Tracker</span>
<div class="r" style="left:163.50px;top:470.60px;width:615.50px;height:320.00px;background:#e3d7c5;"></div>
<div class="r" style="left:213.00px;top:493.30px;width:550.10px;height:1.10px;background:#aaa294;"></div>
<span class="t" style="left:196.51px;top:486.95px;font-size:14px;color:#33363a;font-weight:700;">3</span>
<div class="r" style="left:213.00px;top:579.40px;width:550.10px;height:1.10px;background:#aaa294;"></div>
<span class="t" style="left:196.51px;top:573.05px;font-size:14px;color:#33363a;font-weight:700;">2</span>
<div class="r" style="left:213.00px;top:665.40px;width:550.10px;height:1.10px;background:#aaa294;"></div>
<span class="t" style="left:196.51px;top:659.05px;font-size:14px;color:#33363a;font-weight:700;">1</span>
<span class="t" style="left:196.71px;top:744.55px;font-size:14px;color:#33363a;font-weight:700;">0</span>
<div class="r" style="left:213.00px;top:751.00px;width:550.10px;height:1.60px;background:#2f2f2f;"></div>
<div class="r" style="left:243.00px;top:493.90px;width:55.90px;height:258.70px;background:#777a67;border-radius:2px 2px 0 0;"></div>
<span class="t" style="left:266.67px;top:499.66px;font-size:15.4px;color:#fff;font-weight:700;">3</span>
<span class="t" style="left:236.90px;top:759.63px;font-size:15.2px;color:#3f4247;font-weight:700;letter-spacing:-0.194px;">MATH001</span>
<div class="r" style="left:330.50px;top:580.20px;width:55.50px;height:172.40px;background:#777a67;border-radius:2px 2px 0 0;"></div>
<span class="t" style="left:353.97px;top:585.96px;font-size:15.4px;color:#fff;font-weight:700;">2</span>
<span class="t" style="left:332.95px;top:759.63px;font-size:15.2px;color:#3f4247;font-weight:700;letter-spacing:-0.020px;">SCI001</span>
<div class="r" style="left:416.40px;top:580.20px;width:55.80px;height:172.40px;background:#777a67;border-radius:2px 2px 0 0;"></div>
<span class="t" style="left:440.02px;top:585.96px;font-size:15.4px;color:#fff;font-weight:700;">2</span>
<span class="t" style="left:415.65px;top:759.63px;font-size:15.2px;color:#3f4247;font-weight:700;letter-spacing:-0.200px;">ENG001</span>
<div class="r" style="left:503.50px;top:666.20px;width:55.80px;height:86.40px;background:#777a67;border-radius:2px 2px 0 0;"></div>
<span class="t" style="left:527.12px;top:671.96px;font-size:15.4px;color:#fff;font-weight:700;">1</span>
<span class="t" style="left:501.41px;top:759.63px;font-size:15.2px;color:#3f4247;font-weight:700;">CHM001</span>
<div class="r" style="left:590.00px;top:666.20px;width:55.40px;height:86.40px;background:#777a67;border-radius:2px 2px 0 0;"></div>
<span class="t" style="left:613.42px;top:671.96px;font-size:15.4px;color:#fff;font-weight:700;">1</span>
<span class="t" style="left:589.39px;top:759.63px;font-size:15.2px;color:#3f4247;font-weight:700;">PHY001</span>
<div class="r" style="left:677.10px;top:666.20px;width:55.40px;height:86.40px;background:#777a67;border-radius:2px 2px 0 0;"></div>
<span class="t" style="left:700.52px;top:671.96px;font-size:15.4px;color:#fff;font-weight:700;">1</span>
<span class="t" style="left:679.88px;top:759.63px;font-size:15.2px;color:#3f4247;font-weight:700;">FIN001</span>
<div class="r" style="left:795.00px;top:470.60px;width:522.20px;height:319.80px;background:#e3d7c5;"></div>
<svg class="r" style="left:795px;top:470.600px" width="522.200" height="319.400" viewBox="795 470.600 522.200 319.400"><path d="M1056.3 630.5L1056.30 486.10A144.4 144.4 0 0 1 1193.63 585.88z" fill="#777a67" stroke="#777a67" stroke-width=".5"/><path d="M1056.3 630.5L1193.63 585.88A144.4 144.4 0 0 1 1056.30 774.90z" fill="#aa6b56" stroke="#aa6b56" stroke-width=".5"/><path d="M1056.3 630.5L1056.30 774.90A144.4 144.4 0 0 1 918.97 585.88z" fill="#d7a086" stroke="#d7a086" stroke-width=".5"/><path d="M1056.3 630.5L918.97 585.88A144.4 144.4 0 0 1 971.42 513.68z" fill="#d6c9a7" stroke="#d6c9a7" stroke-width=".5"/><path d="M1056.3 630.5L971.42 513.68A144.4 144.4 0 0 1 1056.30 486.10z" fill="#b7c1b9" stroke="#b7c1b9" stroke-width=".5"/><g fill="none" stroke="#5d6165" stroke-width="1.400"><path d="M811.500 503.800H868L1014.100 500.400"/><path d="M811.500 549.800H945.700"/><path d="M811.500 711H945.700"/><path d="M1301 520H1140.300"/><path d="M1301 711H1166.600"/></g><g fill="#76797d"><circle cx="1014.100" cy="500.400" r="2.300"/><circle cx="945.700" cy="549.800" r="2.300"/><circle cx="945.700" cy="711" r="2.300"/><circle cx="1166.600" cy="711" r="2.300"/></g></svg>
<span class="t" style="left:811.50px;top:485.69px;font-size:15.6px;color:#4c4f54;font-weight:700;letter-spacing:-0.293px;">On Hold</span>
<span class="t" style="left:811.50px;top:504.91px;font-size:15.7px;color:#7b766c;font-weight:700;letter-spacing:-0.504px;">10.0%</span>
<span class="t" style="left:811.50px;top:532.09px;font-size:15.6px;color:#4c4f54;font-weight:700;letter-spacing:-0.217px;">Not Started</span>
<span class="t" style="left:811.50px;top:551.51px;font-size:15.7px;color:#7b766c;font-weight:700;letter-spacing:-0.504px;">10.0%</span>
<span class="t" style="left:811.50px;top:693.59px;font-size:15.6px;color:#4c4f54;font-weight:700;letter-spacing:-0.433px;">Done</span>
<span class="t" style="left:811.50px;top:712.71px;font-size:15.7px;color:#7b766c;font-weight:700;letter-spacing:-0.504px;">30.0%</span>
<span class="t" style="left:1270.00px;top:501.79px;font-size:15.6px;color:#4c4f54;font-weight:700;letter-spacing:-0.359px;">Late</span>
<span class="t" style="left:1258.50px;top:521.01px;font-size:15.7px;color:#7b766c;font-weight:700;letter-spacing:-0.504px;">20.0%</span>
<span class="t" style="left:1216.30px;top:693.59px;font-size:15.6px;color:#4c4f54;font-weight:700;letter-spacing:-0.113px;">In Progress</span>
<span class="t" style="left:1258.50px;top:712.71px;font-size:15.7px;color:#7b766c;font-weight:700;letter-spacing:-0.504px;">30.0%</span>
<span class="t" style="left:1015.38px;top:512.65px;font-size:16.6px;color:#3c4046;font-weight:700;">1</span>
<span class="t" style="left:958.68px;top:555.25px;font-size:16.6px;color:#3c4046;font-weight:700;">1</span>
<span class="t" style="left:1118.28px;top:530.65px;font-size:16.6px;color:#3c4046;font-weight:700;">2</span>
<span class="t" style="left:958.58px;top:690.25px;font-size:16.6px;color:#3c4046;font-weight:700;">3</span>
<span class="t" style="left:1143.78px;top:690.25px;font-size:16.6px;color:#3c4046;font-weight:700;">3</span>
<div class="r" style="left:157.40px;top:808.24px;width:1173.80px;height:27.06px;background:#777a67;"></div>
<span class="t" style="left:162.00px;top:816.80px;font-size:16.7px;color:#fff;font-weight:700;">COURSE</span>
<svg class="r" style="left:284.60px;top:818.04px" width="13.800" height="9.600" viewBox="0 0 13.8 9.6" fill="#1f1f1f"><path d="M0 0h13.800v1.800H0zM2.700 3.900h8.400v1.800H2.700zM5.300 7.800h3.200v1.800H5.300z"/></svg>
<span class="t" style="left:309.80px;top:816.80px;font-size:16.7px;color:#fff;font-weight:700;">ASSIGNMENT</span>
<svg class="r" style="left:808.20px;top:818.04px" width="13.800" height="9.600" viewBox="0 0 13.8 9.6" fill="#1f1f1f"><path d="M0 0h13.800v1.800H0zM2.700 3.900h8.400v1.800H2.700zM5.300 7.800h3.200v1.800H5.300z"/></svg>
<span class="t" style="left:833.40px;top:816.80px;font-size:16.7px;color:#fff;font-weight:700;">DEADLINE</span>
<svg class="r" style="left:934.80px;top:818.04px" width="13.800" height="9.600" viewBox="0 0 13.8 9.6" fill="#1f1f1f"><path d="M0 0h13.800v1.800H0zM2.700 3.900h8.400v1.800H2.700zM5.300 7.800h3.200v1.800H5.300z"/></svg>
<span class="t" style="left:960.00px;top:816.80px;font-size:16.7px;color:#fff;font-weight:700;">DAYS LEFT</span>
<svg class="r" style="left:1061.80px;top:818.04px" width="13.800" height="9.600" viewBox="0 0 13.8 9.6" fill="#1f1f1f"><path d="M0 0h13.800v1.800H0zM2.700 3.900h8.400v1.800H2.700zM5.300 7.800h3.200v1.800H5.300z"/></svg>
<span class="t" style="left:1087.00px;top:816.80px;font-size:16.7px;color:#fff;font-weight:700;">STATUS</span>
<svg class="r" style="left:1201.60px;top:818.04px" width="13.800" height="9.600" viewBox="0 0 13.8 9.6" fill="#1f1f1f"><path d="M0 0h13.800v1.800H0zM2.700 3.900h8.400v1.800H2.700zM5.300 7.800h3.200v1.800H5.300z"/></svg>
<span class="t" style="left:1226.80px;top:816.80px;font-size:16.7px;color:#fff;font-weight:700;">GRADE</span>
<svg class="r" style="left:1310.60px;top:818.04px" width="13.800" height="9.600" viewBox="0 0 13.8 9.6" fill="#1f1f1f"><path d="M0 0h13.800v1.800H0zM2.700 3.900h8.400v1.800H2.700zM5.300 7.800h3.200v1.800H5.300z"/></svg>
<span class="t" style="left:161.80px;top:843.96px;font-size:16.7px;color:#2e2e2e;">MATH001</span>
<span class="t" style="left:309.20px;top:843.96px;font-size:16.7px;color:#2e2e2e;">Math Assignment 1</span>
<span class="t" style="left:860.73px;top:843.96px;font-size:16.7px;color:#2e2e2e;">20 Apr 2022</span>
<span class="t" style="left:1062.95px;top:843.96px;font-size:16.7px;color:#2e2e2e;">-1</span>
<span class="t" style="left:1086.40px;top:843.96px;font-size:16.7px;color:#2e2e2e;">Late</span>
<svg class="r" style="left:287.10px;top:846.40px" width="9.2" height="5.2" viewBox="0 0 10 5" preserveAspectRatio="none" fill="#868889"><path d="M0 0h10L5 5z"/></svg>
<svg class="r" style="left:1203.90px;top:846.40px" width="9.2" height="5.2" viewBox="0 0 10 5" preserveAspectRatio="none" fill="#868889"><path d="M0 0h10L5 5z"/></svg>
<svg class="r" style="left:1312.90px;top:846.40px" width="9.2" height="5.2" viewBox="0 0 10 5" preserveAspectRatio="none" fill="#868889"><path d="M0 0h10L5 5z"/></svg>
<div class="r" style="left:157.40px;top:862.36px;width:1173.80px;height:27.06px;background:#e4d7c4;"></div>
<span class="t" style="left:161.80px;top:871.02px;font-size:16.7px;color:#2e2e2e;">SCI001</span>
<span class="t" style="left:309.20px;top:871.02px;font-size:16.7px;color:#2e2e2e;">General Science Assignment 1</span>
<span class="t" style="left:860.73px;top:871.02px;font-size:16.7px;color:#2e2e2e;">22 Apr 2022</span>
<span class="t" style="left:1068.51px;top:871.02px;font-size:16.7px;color:#2e2e2e;">1</span>
<span class="t" style="left:1086.40px;top:871.02px;font-size:16.7px;color:#2e2e2e;">In Progress</span>
<svg class="r" style="left:287.10px;top:873.46px" width="9.2" height="5.2" viewBox="0 0 10 5" preserveAspectRatio="none" fill="#7f5420"><path d="M0 0h10L5 5z"/></svg>
<svg class="r" style="left:1203.90px;top:873.46px" width="9.2" height="5.2" viewBox="0 0 10 5" preserveAspectRatio="none" fill="#7f5420"><path d="M0 0h10L5 5z"/></svg>
<svg class="r" style="left:1312.90px;top:873.46px" width="9.2" height="5.2" viewBox="0 0 10 5" preserveAspectRatio="none" fill="#7f5420"><path d="M0 0h10L5 5z"/></svg>
<span class="t" style="left:161.80px;top:898.08px;font-size:16.7px;color:#2e2e2e;">ENG001</span>
<span class="t" style="left:309.20px;top:898.08px;font-size:16.7px;color:#2e2e2e;">English Assignment 1</span>
<span class="t" style="left:860.73px;top:898.08px;font-size:16.7px;color:#2e2e2e;">22 Apr 2022</span>
<span class="t" style="left:1068.51px;top:898.08px;font-size:16.7px;color:#2e2e2e;">1</span>
<span class="t" style="left:1086.40px;top:898.08px;font-size:16.7px;color:#2e2e2e;">Done</span>
<span class="t" style="left:1257.93px;top:898.08px;font-size:16.7px;color:#2e2e2e;">A</span>
<svg class="r" style="left:287.10px;top:900.52px" width="9.2" height="5.2" viewBox="0 0 10 5" preserveAspectRatio="none" fill="#868889"><path d="M0 0h10L5 5z"/></svg>
<svg class="r" style="left:1203.90px;top:900.52px" width="9.2" height="5.2" viewBox="0 0 10 5" preserveAspectRatio="none" fill="#868889"><path d="M0 0h10L5 5z"/></svg>
<svg class="r" style="left:1312.90px;top:900.52px" width="9.2" height="5.2" viewBox="0 0 10 5" preserveAspectRatio="none" fill="#868889"><path d="M0 0h10L5 5z"/></svg>
<div class="r" style="left:157.40px;top:916.48px;width:1173.80px;height:27.06px;background:#e4d7c4;"></div>
<span class="t" style="left:161.80px;top:925.14px;font-size:16.7px;color:#2e2e2e;">MATH001</span>
<span class="t" style="left:309.20px;top:925.14px;font-size:16.7px;color:#2e2e2e;">Math Assignment 2</span>
<span class="t" style="left:860.73px;top:925.14px;font-size:16.7px;color:#2e2e2e;">22 Apr 2022</span>
<span class="t" style="left:1068.51px;top:925.14px;font-size:16.7px;color:#2e2e2e;">1</span>
<span class="t" style="left:1086.40px;top:925.14px;font-size:16.7px;color:#2e2e2e;">Not Started</span>
<svg class="r" style="left:287.10px;top:927.58px" width="9.2" height="5.2" viewBox="0 0 10 5" preserveAspectRatio="none" fill="#7f5420"><path d="M0 0h10L5 5z"/></svg>
<svg class="r" style="left:1203.90px;top:927.58px" width="9.2" height="5.2" viewBox="0 0 10 5" preserveAspectRatio="none" fill="#7f5420"><path d="M0 0h10L5 5z"/></svg>
<svg class="r" style="left:1312.90px;top:927.58px" width="9.2" height="5.2" viewBox="0 0 10 5" preserveAspectRatio="none" fill="#7f5420"><path d="M0 0h10L5 5z"/></svg>
<span class="t" style="left:161.80px;top:952.20px;font-size:16.7px;color:#2e2e2e;">SCI001</span>
<span class="t" style="left:309.20px;top:952.20px;font-size:16.7px;color:#2e2e2e;">General Science Assignment 2</span>
<span class="t" style="left:860.73px;top:952.20px;font-size:16.7px;color:#2e2e2e;">23 Apr 2022</span>
<span class="t" style="left:1068.51px;top:952.20px;font-size:16.7px;color:#2e2e2e;">2</span>
<span class="t" style="left:1086.40px;top:952.20px;font-size:16.7px;color:#2e2e2e;">In Progress</span>
<svg class="r" style="left:287.10px;top:954.64px" width="9.2" height="5.2" viewBox="0 0 10 5" preserveAspectRatio="none" fill="#868889"><path d="M0 0h10L5 5z"/></svg>
<svg class="r" style="left:1203.90px;top:954.64px" width="9.2" height="5.2" viewBox="0 0 10 5" preserveAspectRatio="none" fill="#868889"><path d="M0 0h10L5 5z"/></svg>
<svg class="r" style="left:1312.90px;top:954.64px" width="9.2" height="5.2" viewBox="0 0 10 5" preserveAspectRatio="none" fill="#868889"><path d="M0 0h10L5 5z"/></svg>
<div class="r" style="left:157.40px;top:970.60px;width:1173.80px;height:27.06px;background:#e4d7c4;"></div>
<span class="t" style="left:161.80px;top:979.26px;font-size:16.7px;color:#2e2e2e;">ENG001</span>
<span class="t" style="left:309.20px;top:979.26px;font-size:16.7px;color:#2e2e2e;">English Assignment 2</span>
<span class="t" style="left:860.73px;top:979.26px;font-size:16.7px;color:#2e2e2e;">24 Apr 2022</span>
<span class="t" style="left:1068.51px;top:979.26px;font-size:16.7px;color:#2e2e2e;">3</span>
<span class="t" style="left:1086.40px;top:979.26px;font-size:16.7px;color:#2e2e2e;">On Hold</span>
<svg class="r" style="left:287.10px;top:981.70px" width="9.2" height="5.2" viewBox="0 0 10 5" preserveAspectRatio="none" fill="#7f5420"><path d="M0 0h10L5 5z"/></svg>
<svg class="r" style="left:1203.90px;top:981.70px" width="9.2" height="5.2" viewBox="0 0 10 5" preserveAspectRatio="none" fill="#7f5420"><path d="M0 0h10L5 5z"/></svg>
<svg class="r" style="left:1312.90px;top:981.70px" width="9.2" height="5.2" viewBox="0 0 10 5" preserveAspectRatio="none" fill="#7f5420"><path d="M0 0h10L5 5z"/></svg>
<span class="t" style="left:161.80px;top:1006.32px;font-size:16.7px;color:#2e2e2e;">CHM001</span>
<span class="t" style="left:309.20px;top:1006.32px;font-size:16.7px;color:#2e2e2e;">Chemistry Assignment 1</span>
<span class="t" style="left:860.73px;top:1006.32px;font-size:16.7px;color:#2e2e2e;">26 Apr 2022</span>
<span class="t" style="left:1068.51px;top:1006.32px;font-size:16.7px;color:#2e2e2e;">5</span>
<span class="t" style="left:1086.40px;top:1006.32px;font-size:16.7px;color:#2e2e2e;">In Progress</span>
<svg class="r" style="left:287.10px;top:1008.76px" width="9.2" height="5.2" viewBox="0 0 10 5" preserveAspectRatio="none" fill="#868889"><path d="M0 0h10L5 5z"/></svg>
<svg class="r" style="left:1203.90px;top:1008.76px" width="9.2" height="5.2" viewBox="0 0 10 5" preserveAspectRatio="none" fill="#868889"><path d="M0 0h10L5 5z"/></svg>
<svg class="r" style="left:1312.90px;top:1008.76px" width="9.2" height="5.2" viewBox="0 0 10 5" preserveAspectRatio="none" fill="#868889"><path d="M0 0h10L5 5z"/></svg>
<div class="r" style="left:157.40px;top:1024.72px;width:1173.80px;height:27.06px;background:#e4d7c4;"></div>
<span class="t" style="left:161.80px;top:1033.38px;font-size:16.7px;color:#2e2e2e;">PHY001</span>
<span class="t" style="left:309.20px;top:1033.38px;font-size:16.7px;color:#2e2e2e;">Physics Assignment 1</span>
<span class="t" style="left:860.73px;top:1033.38px;font-size:16.7px;color:#2e2e2e;">28 Apr 2022</span>
<span class="t" style="left:1068.51px;top:1033.38px;font-size:16.7px;color:#2e2e2e;">7</span>
<span class="t" style="left:1086.40px;top:1033.38px;font-size:16.7px;color:#2e2e2e;">Done</span>
<span class="t" style="left:1257.93px;top:1033.38px;font-size:16.7px;color:#2e2e2e;">B</span>
<svg class="r" style="left:287.10px;top:1035.82px" width="9.2" height="5.2" viewBox="0 0 10 5" preserveAspectRatio="none" fill="#7f5420"><path d="M0 0h10L5 5z"/></svg>
<svg class="r" style="left:1203.90px;top:1035.82px" width="9.2" height="5.2" viewBox="0 0 10 5" preserveAspectRatio="none" fill="#7f5420"><path d="M0 0h10L5 5z"/></svg>
<svg class="r" style="left:1312.90px;top:1035.82px" width="9.2" height="5.2" viewBox="0 0 10 5" preserveAspectRatio="none" fill="#7f5420"><path d="M0 0h10L5 5z"/></svg>
<div class="r" style="left:157.40px;top:834.45px;width:1173.80px;height:1.30px;background:#4a4a4a;"></div>
<div class="r" style="left:157.40px;top:861.51px;width:1173.80px;height:1.30px;background:#4a4a4a;"></div>
<div class="r" style="left:157.40px;top:888.57px;width:1173.80px;height:1.30px;background:#4a4a4a;"></div>
<div class="r" style="left:157.40px;top:915.63px;width:1173.80px;height:1.30px;background:#4a4a4a;"></div>
<div class="r" style="left:157.40px;top:942.69px;width:1173.80px;height:1.30px;background:#4a4a4a;"></div>
<div class="r" style="left:157.40px;top:969.75px;width:1173.80px;height:1.30px;background:#4a4a4a;"></div>
<div class="r" style="left:157.40px;top:996.81px;width:1173.80px;height:1.30px;background:#4a4a4a;"></div>
<div class="r" style="left:157.40px;top:1023.87px;width:1173.80px;height:1.30px;background:#4a4a4a;"></div>
<div class="r" style="left:157.40px;top:1050.93px;width:1173.80px;height:1.30px;background:#4a4a4a;"></div>
<div class="r" style="left:304.45px;top:808.24px;width:1.30px;height:251.16px;background:#4a4a4a;"></div>
<div class="r" style="left:828.05px;top:808.24px;width:1.30px;height:251.16px;background:#4a4a4a;"></div>
<div class="r" style="left:954.65px;top:808.24px;width:1.30px;height:251.16px;background:#4a4a4a;"></div>
<div class="r" style="left:1081.65px;top:808.24px;width:1.30px;height:251.16px;background:#4a4a4a;"></div>
<div class="r" style="left:1221.45px;top:808.24px;width:1.30px;height:251.16px;background:#4a4a4a;"></div>
<div class="r" style="left:157.10px;top:807.64px;width:2.10px;height:251.76px;background:#2f6e33;"></div>
<div class="r" style="left:1330.80px;top:807.64px;width:1.80px;height:251.76px;background:#2f6e33;"></div>
<div class="r" style="left:157.10px;top:807.64px;width:1175.30px;height:1.30px;background:#2f6e33;"></div>
<div class="r" style="left:67.00px;top:1059.40px;width:1301.00px;height:10.60px;background:#f8f9fa;"></div>
<div class="r" style="left:125.20px;top:1059.40px;width:1242.80px;height:10.60px;background:#fff;"></div>
<div class="r" style="left:67.00px;top:1059.00px;width:1301.00px;height:1.00px;background:#e3e3e3;"></div>
<div class="r" style="left:127.80px;top:1061.20px;width:422.00px;height:7.40px;background:#dadce0;border-radius:4px;"></div>
<div class="r" style="left:1339.00px;top:1060.00px;width:28.50px;height:10.00px;background:#fff;border:1px solid #ebebeb;box-sizing:border-box;"></div>
<div class="r" style="left:1353.00px;top:1060.00px;width:1.00px;height:10.00px;background:#e0e0e0;"></div>
<svg class="r" style="left:1343.500px;top:1062.500px" width="4" height="5" viewBox="0 0 4 5" fill="#b3b6ba"><path d="M4 0v5L0 2.500z"/></svg>
<svg class="r" style="left:1358.500px;top:1062.500px" width="4" height="5" viewBox="0 0 4 5" fill="#b3b6ba"><path d="M0 0v5l4-2.500z"/></svg>
<div class="r" style="left:1368.50px;top:1030.80px;width:9.50px;height:28.60px;background:#fff;border:1px solid #ebebeb;box-sizing:border-box;"></div>
<div class="r" style="left:1368.50px;top:1044.50px;width:9.50px;height:1.00px;background:#e0e0e0;"></div>
<svg class="r" style="left:1370.800px;top:1035.500px" width="5" height="4" viewBox="0 0 5 4" fill="#b3b6ba"><path d="M0 4h5L2.500 0z"/></svg>
<svg class="r" style="left:1370.800px;top:1049.500px" width="5" height="4" viewBox="0 0 5 4" fill="#b3b6ba"><path d="M0 0h5L2.500 4z"/></svg>
<div class="r" style="left:67.00px;top:1070.00px;width:1311.40px;height:34.70px;background:linear-gradient(#f3f4f5 0%,#f0f1f2 55%,#e4e5e7 100%);border-radius:0 0 0 5px;"></div>
<div class="r" style="left:67.00px;top:1069.60px;width:1311.40px;height:1.00px;background:#e0e0e0;"></div>
<svg class="r" style="left:110.80px;top:1079.70px;" width="15.4" height="15.4" viewBox="0 0 24 24" fill="#444746"><path d="M19 13h-6v6h-2v-6H5v-2h6V5h2v6h6v2z"/></svg>
<svg class="r" style="left:141px;top:1082.300px" width="11.800" height="10.600" viewBox="0 0 11.8 10.6" fill="#444746"><path d="M0 0h11.800v1.500H0zM0 3h11.800v1.500H0zM0 6h11.800v1.500H0zM0 9h11.800v1.500H0z"/></svg>
<div class="r" style="left:174.00px;top:1070.50px;width:1.00px;height:34.00px;background:#e8e9eb;"></div>
<div class="r" style="left:288.60px;top:1070.50px;width:1.00px;height:34.00px;background:#e8e9eb;"></div>
<span class="t" style="left:188.80px;top:1081.20px;font-size:13.7px;color:#5f6368;letter-spacing:0.480px;-webkit-text-stroke:.45px #5f6368;">Instruction</span>
<svg class="r" style="left:266.20px;top:1086.75px" width="7.0" height="3.7" viewBox="0 0 10 5" preserveAspectRatio="none" fill="#5f6368"><path d="M0 0h10L5 5z"/></svg>
<span class="t" style="left:303.60px;top:1081.20px;font-size:13.7px;color:#5f6368;letter-spacing:0.106px;-webkit-text-stroke:.45px #5f6368;">Master</span>
<svg class="r" style="left:355.30px;top:1086.75px" width="7.0" height="3.7" viewBox="0 0 10 5" preserveAspectRatio="none" fill="#5f6368"><path d="M0 0h10L5 5z"/></svg>
<div class="r" style="left:377.60px;top:1070.30px;width:171.70px;height:34.40px;background:linear-gradient(#fff 0%,#fff 78%,#f3f3f4 100%);box-shadow:0 1px 3px rgba(0,0,0,.16);"></div>
<span class="t" style="left:393.30px;top:1081.20px;font-size:13.7px;color:#188038;letter-spacing:0.199px;-webkit-text-stroke:.45px #188038;">Assignment Tracker</span>
<svg class="r" style="left:526.40px;top:1086.70px" width="7.6" height="4.0" viewBox="0 0 10 5" preserveAspectRatio="none" fill="#188038"><path d="M0 0h10L5 5z"/></svg>
<svg class="r" style="left:1291.800px;top:1080px" width="17.400" height="18.400" viewBox="0 0 17.4 18.4"><path d="M2.200 0h13a2.200 2.200 0 0 1 2.200 2.200v10.600a2.200 2.200 0 0 1-2.200 2.200H11.500L8.700 18.400 5.900 15H2.200A2.200 2.200 0 0 1 0 12.800V2.200A2.200 2.200 0 0 1 2.200 0z" fill="#5f6368"/><path d="M8.700 3l1.300 3.200 3.200 1.300-3.200 1.300-1.300 3.200-1.300-3.200L4.200 7.500l3.200-1.300z" fill="#f1f3f4"/></svg>
<svg class="r" style="left:1345.30px;top:1082.10px;" width="15" height="15" viewBox="0 0 24 24" fill="#444746"><path d="M15.410 7.410L14 6l-6 6 6 6 1.410-1.410L10.830 12z"/></svg>
</div></body></html>
